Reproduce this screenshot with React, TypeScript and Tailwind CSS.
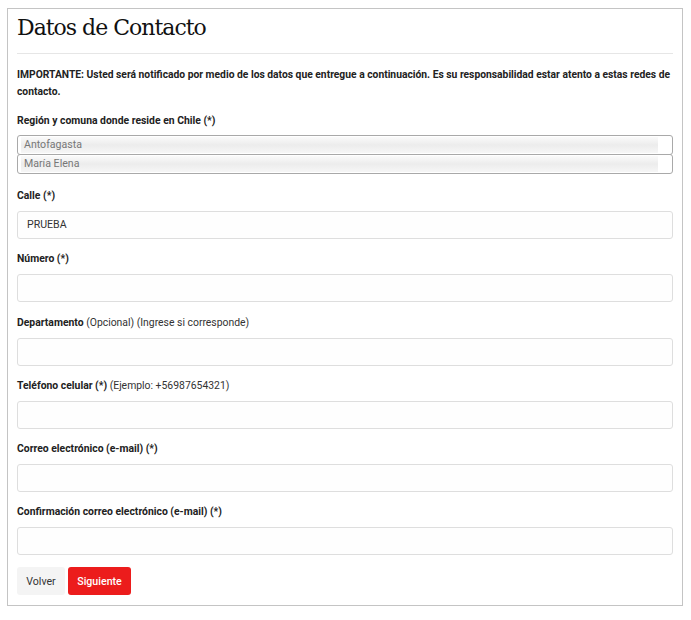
import React from "react";

function Field({ label, extra, value }: { label: string; extra?: string; value?: string }) {
  return (
    <div className="flex flex-col">
      <div className="h-[17px] text-[10.4px] leading-[17px] text-[#222]">
        <span className="font-bold">{label}</span>
        {extra ? <span className="font-normal text-[#333]"> {extra}</span> : null}
      </div>
      <div className="mt-[7px] flex h-[28px] items-center rounded-[3px] border border-[#dedede] bg-[#fefefe] px-[9px] text-[10.6px] text-[#333]">
        {value}
      </div>
    </div>
  );
}

function SelectBox({ value }: { value: string }) {
  return (
    <div className="relative flex h-[20px] items-center rounded-[3px] border border-[#a9a9a9] bg-white pl-[3px] pr-[14px]">
      <div className="flex h-[16px] w-full items-center bg-gradient-to-b from-[#fafafa] via-[#ececec] to-[#f6f6f6] pl-[3px] text-[10.6px] text-[#777]">
        {value}
      </div>
    </div>
  );
}

export default function App() {
  return (
    <div className="min-h-[620px] bg-white" style={{ fontFamily: "Roboto, 'Liberation Sans', sans-serif" }}>
      <div className="ml-[7px] mt-[8px] w-[676px] border border-[#c4c4c4] px-[9px] pb-[10px]">
        <div
          className="h-[44px] pt-[2px] text-[22px] leading-[34px] text-[#111]"
          style={{ fontFamily: "'DejaVu Serif', 'Liberation Serif', serif", letterSpacing: "-1px" }}
        >
          Datos de Contacto
        </div>
        <div className="h-px bg-[#e6e6e6]" />
        <p className="mt-[12px] text-[10.3px] font-bold leading-[17px] text-[#222]">
          IMPORTANTE: Usted será notificado por medio de los datos que entregue a continuación. Es su responsabilidad estar atento a estas redes de contacto.
        </p>
        <div className="mt-[12px] h-[17px] text-[10.4px] font-bold leading-[17px] text-[#222]">
          Región y comuna donde reside en Chile (*)
        </div>
        <div className="mt-[6px] flex flex-col">
          <SelectBox value="Antofagasta" />
          <div className="-mt-px">
            <SelectBox value="María Elena" />
          </div>
        </div>
        <div className="mt-[13px] flex flex-col gap-[11.3px]">
          <Field label="Calle (*)" value="PRUEBA" />
          <Field label="Número (*)" />
          <Field label="Departamento" extra="(Opcional) (Ingrese si corresponde)" />
          <Field label="Teléfono celular (*)" extra="(Ejemplo: +56987654321)" />
          <Field label="Correo electrónico (e-mail) (*)" />
          <Field label="Confirmación correo electrónico (e-mail) (*)" />
        </div>
        <div className="mt-[12px] flex gap-[3px]">
          <button className="h-[28px] w-[48px] rounded-[3px] bg-[#f4f4f4] text-[10.6px] text-[#333]">Volver</button>
          <button className="h-[28px] w-[63px] rounded-[3px] bg-[#ec1c1c] text-[10.6px] font-medium text-white">Siguiente</button>
        </div>
      </div>
    </div>
  );
}
